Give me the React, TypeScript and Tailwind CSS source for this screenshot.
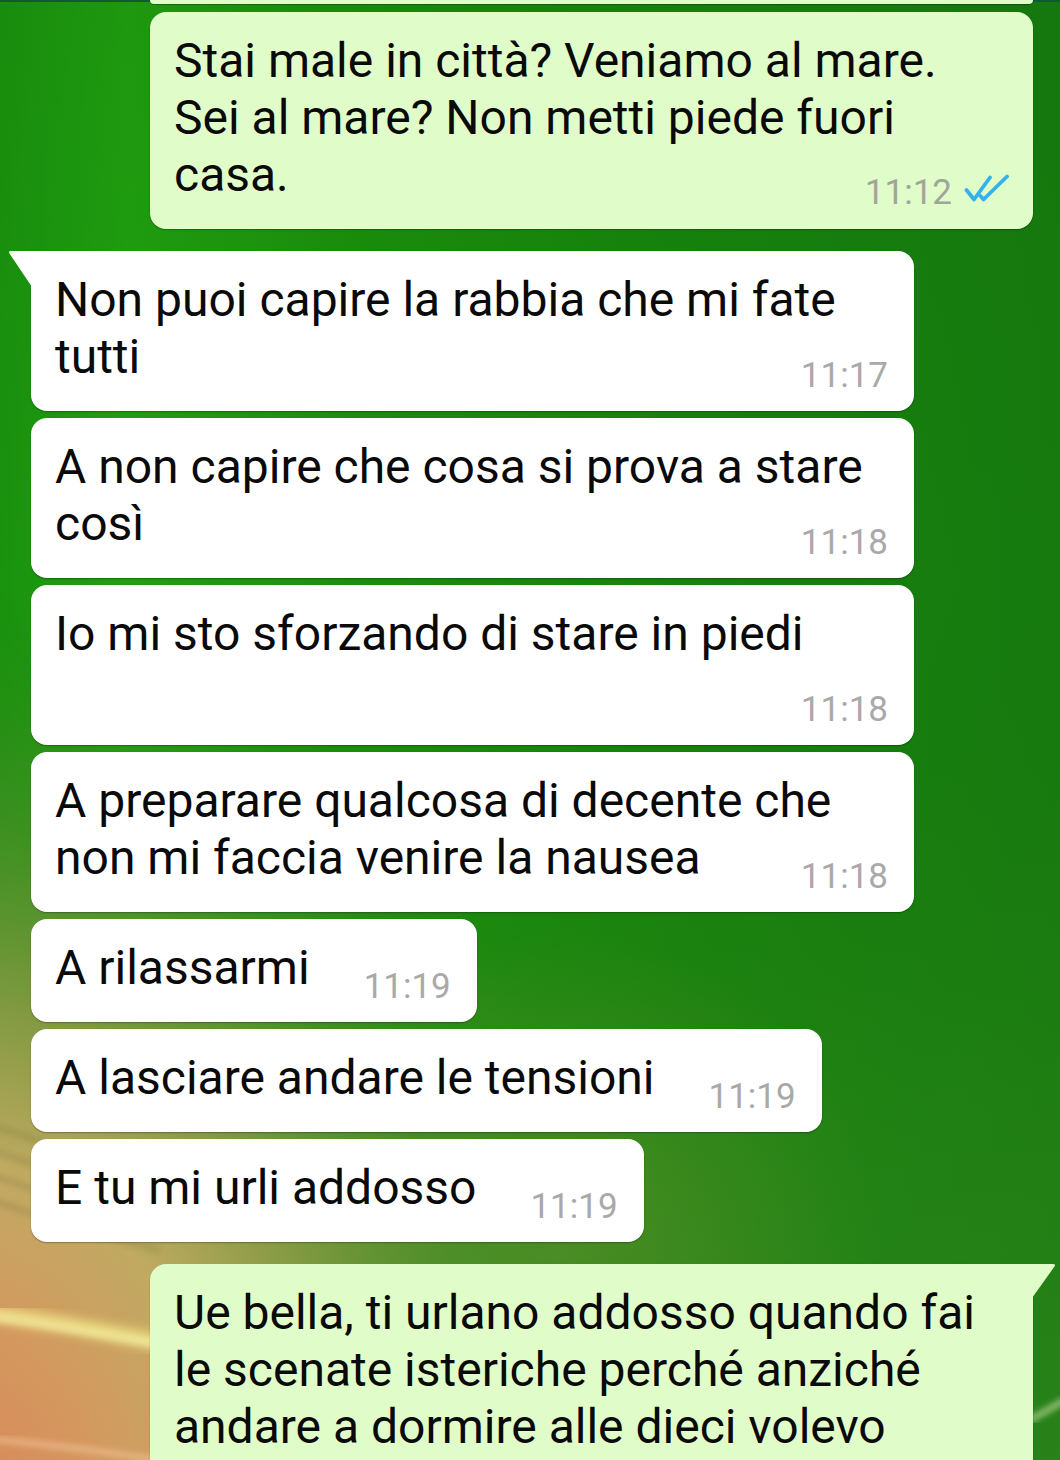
import React from "react";

type Msg = {
  lines: string[];
  time: string;
  out?: boolean;
  tail?: boolean;
  fixed?: boolean;
  timeOwnRow?: boolean;
  ticks?: boolean;
  noTime?: boolean;
};

function Ticks() {
  return (
    <svg width="46" height="29" viewBox="0 0 46 29" className="mb-[8px] -mr-[3px]" fill="none">
      <path d="M2.5 16 L10 25.5 L26 3.5" stroke="#34b2ec" strokeWidth="3.8" strokeLinecap="round" strokeLinejoin="round" />
      <path d="M16.5 22 L19.5 25.5 L43 2.5" stroke="#34b2ec" strokeWidth="3.8" strokeLinecap="round" strokeLinejoin="round" />
    </svg>
  );
}

function TimeStamp({ time, out, ticks }: { time: string; out?: boolean; ticks?: boolean }) {
  return (
    <div className="flex items-center gap-[12px] -mb-2 shrink-0">
      <span className={"text-[35px] leading-[35px] " + (out ? "text-[#9ea699]" : "text-[#a9a9a9]")}>{time}</span>
      {ticks && <Ticks />}
    </div>
  );
}

function Bubble({ m }: { m: Msg }) {
  const head = m.lines.slice(0, -1);
  const last = m.lines[m.lines.length - 1];
  const base = m.out ? "bg-[#e0fcc8] self-end" : "bg-white self-start";
  const radius = m.tail
    ? m.out
      ? "rounded-[16px] rounded-tr-none"
      : "rounded-[16px] rounded-tl-none"
    : "rounded-[16px]";
  const width = m.fixed ? "w-[883px]" : "w-fit";
  return (
    <div className={"relative shadow-[0_1px_1.5px_rgba(0,0,0,0.3)] pl-[24px] pr-[26px] pt-[20px] pb-[26px] " + base + " " + radius + " " + width}>
      {m.tail && !m.out && (
        <svg className="absolute left-[-23px] top-0" width="24" height="36" viewBox="0 0 24 36">
          <path d="M24 0 L3 0 Q0 0 1.5 2.5 L24 36 Z" fill="#ffffff" />
        </svg>
      )}
      {m.tail && m.out && (
        <svg className="absolute right-[-23px] top-0" width="24" height="34" viewBox="0 0 24 34">
          <path d="M0 0 L21 0 Q24 0 22.5 2.5 L0 34 Z" fill="#e0fcc8" />
        </svg>
      )}
      <div className="text-[48px] leading-[57px] text-[#0a0a0a] whitespace-nowrap">
        {head.map((l, i) => (
          <div key={i}>{l}</div>
        ))}
        {m.noTime ? (
          <div>{last}</div>
        ) : m.timeOwnRow ? (
          <>
            <div>{last}</div>
            <div className="flex items-end justify-end h-[57px]">
              <TimeStamp time={m.time} out={m.out} ticks={m.ticks} />
            </div>
          </>
        ) : (
          <div className="flex items-end justify-between gap-[54px]">
            <span>{last}</span>
            <TimeStamp time={m.time} out={m.out} ticks={m.ticks} />
          </div>
        )}
      </div>
    </div>
  );
}

function Wallpaper() {
  return (
    <svg className="absolute inset-0" width="1060" height="1460" viewBox="0 0 1060 1460">
      <defs>
        <linearGradient id="base" x1="0" y1="0" x2="1" y2="0">
          <stop offset="0" stopColor="#1a920e" />
          <stop offset="0.12" stopColor="#21a010" />
          <stop offset="0.35" stopColor="#1a8e0c" />
          <stop offset="0.65" stopColor="#17820c" />
          <stop offset="1" stopColor="#167a0f" />
        </linearGradient>
        <linearGradient id="vert" x1="0" y1="0" x2="0" y2="1">
          <stop offset="0" stopColor="#0f6a0a" stopOpacity="0.15" />
          <stop offset="0.4" stopColor="#0f6a0a" stopOpacity="0" />
          <stop offset="0.75" stopColor="#3a8a20" stopOpacity="0.25" />
          <stop offset="1" stopColor="#3f8a25" stopOpacity="0.45" />
        </linearGradient>
        <radialGradient id="bl" gradientUnits="userSpaceOnUse" cx="-60" cy="1520" r="720" gradientTransform="translate(-60 1520) scale(1 1.25) translate(60 -1520)">
          <stop offset="0" stopColor="#d98458" />
          <stop offset="0.22" stopColor="#d4985e" />
          <stop offset="0.4" stopColor="#c0aa62" />
          <stop offset="0.58" stopColor="#8a9a45" stopOpacity="0.9" />
          <stop offset="0.78" stopColor="#5a9030" stopOpacity="0.5" />
          <stop offset="1" stopColor="#3a8a20" stopOpacity="0" />
        </radialGradient>
        <radialGradient id="mid" gradientUnits="userSpaceOnUse" cx="560" cy="1250" r="320">
          <stop offset="0" stopColor="#5c8e2c" stopOpacity="0.7" />
          <stop offset="1" stopColor="#5c8e2c" stopOpacity="0" />
        </radialGradient>
        <filter id="blur6"><feGaussianBlur stdDeviation="6" /></filter>
        <filter id="blur3"><feGaussianBlur stdDeviation="3" /></filter>
      </defs>
      <rect width="1060" height="1460" fill="url(#base)" />
      <rect width="1060" height="1460" fill="url(#vert)" />
      <rect width="1060" height="1460" fill="url(#mid)" />
      <rect width="1060" height="1460" fill="url(#bl)" />
      <g filter="url(#blur3)" opacity="0.35" fill="none" stroke="#6e6a30" strokeWidth="4">
        <path d="M-10 1125 C 40 1140, 90 1160, 160 1175" />
        <path d="M-10 1150 C 40 1165, 90 1185, 160 1200" />
        <path d="M-10 1175 C 40 1190, 90 1210, 160 1225" />
        <path d="M-10 1200 C 40 1215, 90 1235, 160 1250" />
      </g>
      <path d="M-20 1312 C 60 1322, 120 1335, 200 1350" stroke="#f6f090" strokeWidth="14" fill="none" filter="url(#blur6)" opacity="0.85" />
      <path d="M-20 1316 C 60 1326, 120 1338, 200 1352" stroke="#fbf8b8" strokeWidth="4" fill="none" filter="url(#blur3)" opacity="0.7" />
      <path d="M-20 1438 C 50 1444, 110 1452, 170 1462" stroke="#f6c8a0" strokeWidth="6" fill="none" filter="url(#blur3)" opacity="0.6" />
      <path d="M1030 1420 C 1045 1412, 1055 1405, 1070 1398" stroke="#e8f0c0" strokeWidth="6" fill="none" filter="url(#blur3)" opacity="0.6" />
      <rect x="0" y="0" width="1060" height="2" fill="#0e5a34" />
    </svg>
  );
}

const msgs: Msg[] = [
  { lines: ["Stai male in città? Veniamo al mare.", "Sei al mare? Non metti piede fuori", "casa."], time: "11:12", out: true, fixed: true, ticks: true },
  { lines: ["Non puoi capire la rabbia che mi fate", "tutti"], time: "11:17", tail: true, fixed: true },
  { lines: ["A non capire che cosa si prova a stare", "così"], time: "11:18", fixed: true },
  { lines: ["Io mi sto sforzando di stare in piedi"], time: "11:18", fixed: true, timeOwnRow: true },
  { lines: ["A preparare qualcosa di decente che", "non mi faccia venire la nausea"], time: "11:18", fixed: true },
  { lines: ["A rilassarmi"], time: "11:19" },
  { lines: ["A lasciare andare le tensioni"], time: "11:19" },
  { lines: ["E tu mi urli addosso"], time: "11:19" },
  { lines: ["Ue bella, ti urlano addosso quando fai", "le scenate isteriche perché anziché", "andare a dormire alle dieci volevo"], time: "", out: true, tail: true, fixed: true, noTime: true },
];

export default function App() {
  const gapFor = (i: number) => {
    if (i === 0) return "mt-[8px]";
    const prev = msgs[i - 1];
    const cur = msgs[i];
    return prev.out === cur.out ? "mt-[7px]" : "mt-[22px]";
  };
  return (
    <div className="relative w-[1060px] h-[1460px] overflow-hidden font-['Roboto','Noto_Sans',sans-serif]">
      <Wallpaper />
      <div className="relative flex flex-col pl-[31px] pr-[27px]">
        <div className="self-end w-[883px] h-[4px] bg-[#e0fcc8] rounded-b-[4px] shadow-[0_1px_1px_rgba(0,0,0,0.3)]" />
        {msgs.map((m, i) => (
          <div key={i} className={"flex flex-col " + gapFor(i)}>
            <Bubble m={m} />
          </div>
        ))}
      </div>
    </div>
  );
}
